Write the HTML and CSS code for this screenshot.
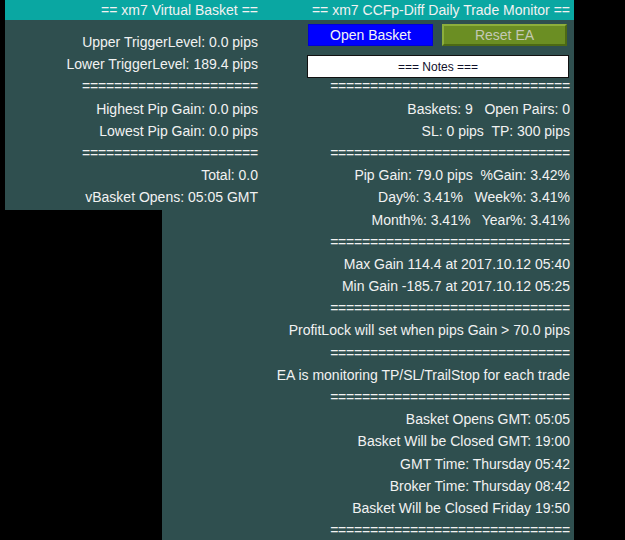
FILE: index.html
```html
<!DOCTYPE html>
<html lang="en">
<head>
  <meta charset="UTF-8" />
  <meta name="viewport" content="width=device-width, initial-scale=1.0"/>
  <title>xm7 CCFp-Diff Daily Trade Monitor</title>
  <link rel="stylesheet" href="styles.css">
</head>
<body>

<div class="desk">
  <section class="panel basket">
    <header class="panel-title">== xm7 Virtual Basket ==</header>
    <ul class="lines">
      <li>Upper TriggerLevel: 0.0 pips</li>
      <li>Lower TriggerLevel: 189.4 pips</li>
      <li class="rule">======================</li>
      <li>Highest Pip Gain: 0.0 pips</li>
      <li>Lowest Pip Gain: 0.0 pips</li>
      <li class="rule">======================</li>
      <li>Total: 0.0</li>
      <li>vBasket Opens: 05:05 GMT</li>
    </ul>
  </section>

  <section class="panel monitor">
    <header class="panel-title">== xm7 CCFp-Diff Daily Trade Monitor ==</header>
    <div class="actions">
      <button class="btn btn-open">Open Basket</button>
      <button class="btn btn-reset">Reset EA</button>
    </div>
    <div class="notes">=== Notes ===</div>
    <ul class="lines">
      <li class="rule">==============================</li>
      <li>Baskets: 9   Open Pairs: 0</li>
      <li>SL: 0 pips  TP: 300 pips</li>
      <li class="rule">==============================</li>
      <li>Pip Gain: 79.0 pips  %Gain: 3.42%</li>
      <li>Day%: 3.41%   Week%: 3.41%</li>
      <li>Month%: 3.41%   Year%: 3.41%</li>
      <li class="rule">==============================</li>
      <li>Max Gain 114.4 at 2017.10.12 05:40</li>
      <li>Min Gain -185.7 at 2017.10.12 05:25</li>
      <li class="rule">==============================</li>
      <li>ProfitLock will set when pips Gain &gt; 70.0 pips</li>
      <li class="rule">==============================</li>
      <li>EA is monitoring TP/SL/TrailStop for each trade</li>
      <li class="rule">==============================</li>
      <li>Basket Opens GMT: 05:05</li>
      <li>Basket Will be Closed GMT: 19:00</li>
      <li>GMT Time: Thursday 05:42</li>
      <li>Broker Time: Thursday 08:42</li>
      <li>Basket Will be Closed Friday 19:50</li>
      <li class="rule">==============================</li>
    </ul>
  </section>
</div>

</body>
</html>
```

FILE: styles.css
```css
* {
  box-sizing: border-box;
}

body {
  margin: 0;
  padding: 0;
  background: #000;
  font-family: 'Liberation Sans', Arial, sans-serif;
  font-size: 14px;
  color: #f2f2f2;
  overflow: hidden;
}

/* two chart panels; the basket panel sits over the monitor's left part */
.desk {
  display: grid;
  grid-template-columns: 5px 157px 100px 312px;
  align-items: start;
}

.panel {
  background: #2f4f4f;
  grid-row: 1;
}

.basket {
  grid-column: 2 / 4;
  height: 210px;
  z-index: 2;
}

.monitor {
  grid-column: 3 / 5;
  z-index: 1;
  min-height: 540px;
}

.panel-title {
  background: #0aa7a2;
  height: 20px;
  line-height: 20px;
  text-align: right;
  padding-right: 4px;
  white-space: nowrap;
}

.lines {
  list-style: none;
  margin: 0;
  padding: 0 4px 0 0;
  text-align: right;
}

.lines li {
  height: 22.2px;
  line-height: 22.2px;
  white-space: pre;
}

.basket .lines {
  padding-top: 11px;
}

.monitor .lines {
  margin-top: -2.6px;
}

.rule {
  letter-spacing: -0.18px;
}

.actions {
  display: flex;
  justify-content: flex-end;
  gap: 9px;
  padding: 4px 7px 0 0;
}

.btn {
  width: 125px;
  height: 22px;
  padding: 0;
  font-family: inherit;
  font-size: 14px;
  cursor: pointer;
}

.btn-open {
  background: #0000ff;
  color: #f4f4f4;
  border: 1px solid #0000d8;
}

.btn-reset {
  background: #6b8e23;
  color: #c4c9b4;
  border: 2px solid;
  border-color: #8cae3c #4d6a14 #4d6a14 #8cae3c;
}

.notes {
  width: 262px;
  height: 23px;
  margin: 9px 5px 0 auto;
  background: #fff;
  border: 1px solid #111;
  color: #10102a;
  font-size: 12px;
  line-height: 22px;
  text-align: center;
}
```
